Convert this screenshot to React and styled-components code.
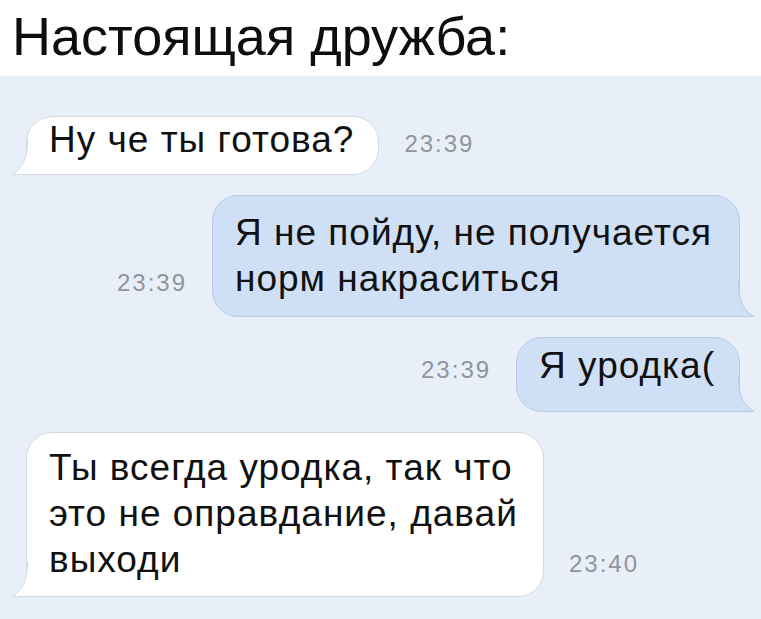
import React from "react";
import styled, { createGlobalStyle } from "styled-components";

const Global = createGlobalStyle`
  html, body {
    margin: 0;
    padding: 0;
    background: #ffffff;
  }
  body {
    font-family: "Liberation Sans", Arial, sans-serif;
  }
`;

const Page = styled.div`
  width: 761px;
  height: 619px;
  display: flex;
  flex-direction: column;
  overflow: hidden;
`;

const Header = styled.header`
  flex: none;
  box-sizing: border-box;
  height: 76px;
  padding: 8px 0 0 12px;
  background: #ffffff;
`;

const Title = styled.h1`
  margin: 0;
  font-size: 54px;
  line-height: 56px;
  font-weight: 400;
  color: #0e0e0e;
  white-space: nowrap;
`;

const Chat = styled.main`
  flex: 1;
  display: flex;
  flex-direction: column;
  gap: 20px;
  padding: 40px 21px 0 26px;
  background: #e9eff8;
`;

const Row = styled.div`
  display: flex;
  align-items: last baseline;
  justify-content: ${(p) => (p.$out ? "flex-end" : "flex-start")};
  gap: 25px;
`;

const Bubble = styled.div`
  position: relative;
  z-index: 0;
  box-sizing: border-box;
  max-width: ${(p) => p.$max || 528}px;
  padding: ${(p) => p.$pt}px 24px ${(p) => p.$pb}px 22px;
  font-size: 37px;
  line-height: 46px;
  letter-spacing: 1px;
  color: #111111;
  background: ${(p) => (p.$out ? "#cfe0f6" : "#ffffff")};
  border: 1px solid ${(p) => (p.$out ? "#b7cbe4" : "#d4dae2")};
  border-radius: 26px;
`;

const TailSvg = styled.svg`
  position: absolute;
  z-index: -1;
  bottom: -1px;
  ${(p) => (p.$out ? "right: -16px; transform: scaleX(-1);" : "left: -16px;")}
  width: 44px;
  height: 35px;
  overflow: visible;
`;

const Time = styled.span`
  flex: none;
  font-size: 24px;
  line-height: 24px;
  letter-spacing: 2px;
  color: #8f959d;
`;

function Tail({ out }) {
  const fill = out ? "#cfe0f6" : "#ffffff";
  const stroke = out ? "#b7cbe4" : "#d4dae2";
  return (
    <TailSvg $out={out} viewBox="0 0 44 35">
      <path d="M16.5 0 C16.5 18 12 28 1 34.5 L44 34.5 L44 0 Z" fill={fill} />
      <path
        d="M16.5 0 C16.5 18 12 28 1 34.5 L44 34.5"
        fill="none"
        stroke={stroke}
        strokeWidth="1"
      />
    </TailSvg>
  );
}

function Message({ out, time, pt, pb, max, children }) {
  return (
    <Row $out={out}>
      {out && <Time>{time}</Time>}
      <Bubble $out={out} $pt={pt} $pb={pb} $max={max}>
        <Tail out={out} />
        {children}
      </Bubble>
      {!out && <Time>{time}</Time>}
    </Row>
  );
}

export default function App() {
  return (
    <Page>
      <Global />
      <Header>
        <Title>Настоящая дружба:</Title>
      </Header>
      <Chat>
        <Message time="23:39" pt={0} pb={11}>
          Ну че ты готова?
        </Message>
        <Message out time="23:39" pt={14} pb={14} max={528}>
          Я не пойду, не получается норм накраситься
        </Message>
        <Message out time="23:39" pt={5} pb={22}>
          Я уродка(
        </Message>
        <Message time="23:40" pt={12} pb={13} max={518}>
          Ты всегда уродка, так что это не оправдание, давай выходи
        </Message>
      </Chat>
    </Page>
  );
}
